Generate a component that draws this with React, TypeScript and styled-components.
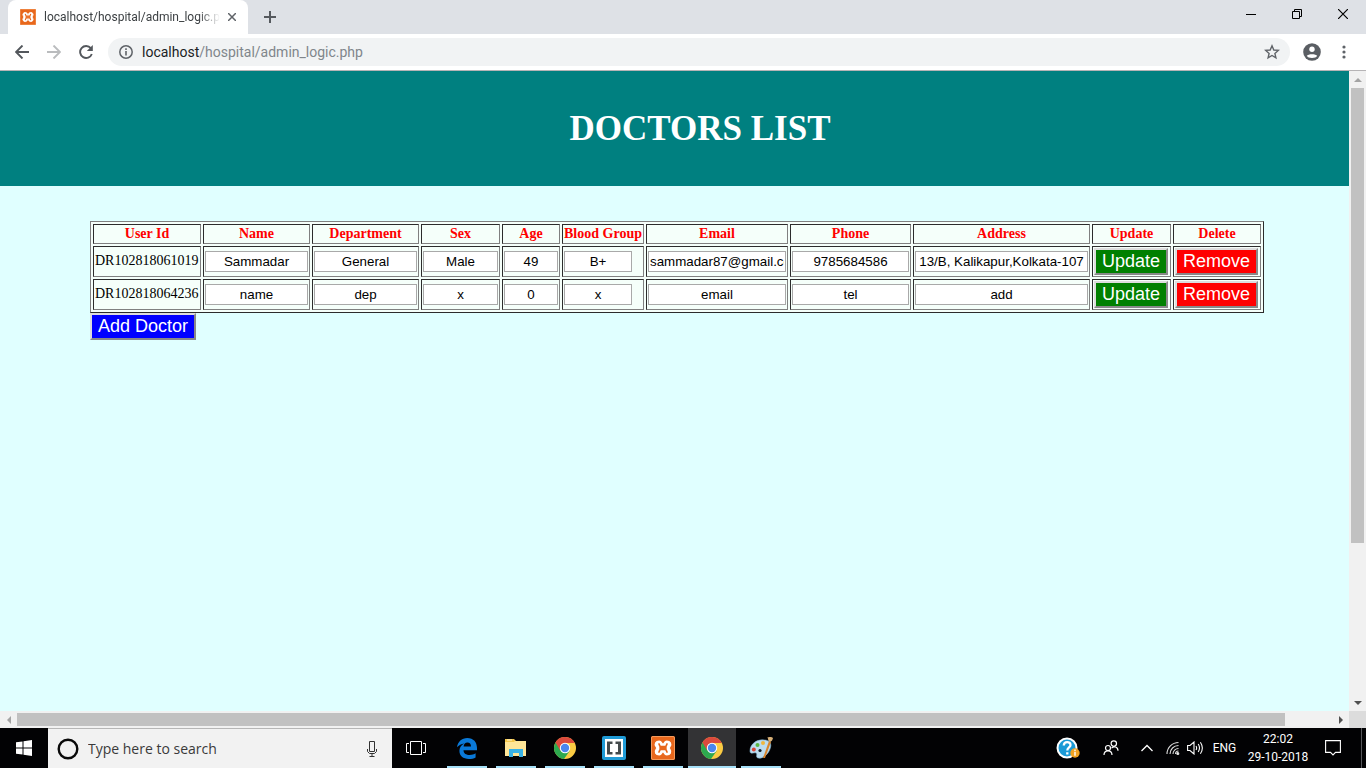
import React from "react";
import styled, { createGlobalStyle } from "styled-components";

const uiFont = `"Open Sans", "Noto Sans", sans-serif`;
const compactFont = `Roboto, "Open Sans", sans-serif`;

const GlobalStyle = createGlobalStyle`
  *, *::before, *::after { box-sizing: border-box; }
  html, body { margin: 0; height: 100%; }
  #root { height: 100%; }
  button { cursor: pointer; }
`;

const Desktop = styled.div`
  display: flex;
  flex-direction: column;
  height: 100vh;
  overflow: hidden;
  font-family: ${uiFont};
`;

const IconButton = styled.button<{ $width?: number }>`
  display: flex;
  align-items: center;
  justify-content: center;
  flex: none;
  width: ${(p) => p.$width ?? 32}px;
  height: 100%;
  padding: 0;
  border: 0;
  background: transparent;
  svg { display: block; flex: none; }
`;

/* Browser chrome */

const TabStrip = styled.div`
  display: flex;
  flex: none;
  height: 34px;
  padding-left: 8px;
  background: #dee1e6;
`;

const Tab = styled.div`
  display: flex;
  align-items: center;
  width: 240px;
  padding: 0 8px 0 12px;
  border-radius: 8px 8px 0 0;
  background: #fff;
`;

const TabTitle = styled.span`
  flex: 1;
  margin: 0 4px 0 8px;
  overflow: hidden;
  white-space: nowrap;
  font-family: ${compactFont};
  font-size: 12px;
  line-height: 16px;
  color: #3c4043;
  mask-image: linear-gradient(to right, #000 88%, transparent);
`;

const WindowControls = styled.div`
  display: flex;
  height: 28px;
  margin-left: auto;
`;

const Toolbar = styled.div`
  display: flex;
  align-items: center;
  flex: none;
  height: 37px;
  padding: 0 6px;
  border-bottom: 1px solid #b6b4b6;
  background: #fff;
`;

const AddressBar = styled.div`
  display: flex;
  align-items: center;
  flex: 1;
  height: 28px;
  margin: 0 6px;
  padding: 0 2px;
  border-radius: 14px;
  background: #f1f3f4;
`;

const Address = styled.div`
  flex: 1;
  font-family: ${compactFont};
  font-size: 14px;
  line-height: 20px;
  color: #80868b;
  b { font-weight: 400; color: #202124; }
`;

/* Scroll bars and page frame */

const Frame = styled.div`
  display: grid;
  grid-template-columns: minmax(0, 1fr) 17px;
  grid-template-rows: minmax(0, 1fr) 17px;
  flex: 1;
  min-height: 0;
`;

const Page = styled.main`
  overflow: hidden;
  background: #e0ffff;
  font-family: "Liberation Serif", "Times New Roman", serif;
`;

const Scrollbar = styled.div<{ $vertical?: boolean }>`
  display: flex;
  flex-direction: ${(p) => (p.$vertical ? "column" : "row")};
  align-items: stretch;
  background: #f1f1f1;
`;

const ScrollArrow = styled.button`
  display: flex;
  align-items: center;
  justify-content: center;
  flex: none;
  width: 17px;
  height: 17px;
  padding: 0;
  border: 0;
  background: transparent;
`;

const Thumb = styled.div<{ $share: number; $vertical?: boolean }>`
  flex: ${(p) => p.$share} 1 0;
  margin: ${(p) => (p.$vertical ? "0 2px" : "2px 0")};
  background: #c1c1c1;
`;

const Track = styled.div<{ $share: number }>`
  flex: ${(p) => p.$share} 1 0;
`;

const Corner = styled.div`
  background: #dcdcdc;
`;

/* Web page */

const Banner = styled.header`
  min-width: 1400px;
  padding: 38px 0 37px;
  background: #008080;
`;

const Title = styled.h1`
  margin: 0;
  font-size: 35px;
  line-height: 40px;
  text-align: center;
  color: #fff;
`;

const Content = styled.section`
  min-width: 1400px;
  padding: 35px 90px;
`;

const DoctorTable = styled.table`
  width: 1174px;
  table-layout: fixed;
  border: 1px solid;
  border-color: #808080 #2c2c2c #2c2c2c #808080;
  border-collapse: separate;
  border-spacing: 2px;
  background: #f5fffa;
  font-size: 14px;
  line-height: 16px;
  th, td {
    padding: 1px;
    border: 1px solid;
    border-color: #2c2c2c #808080 #808080 #2c2c2c;
    white-space: nowrap;
  }
  th { height: 20px; color: #f00; }
  td { height: 31px; }
  td:first-child { padding-bottom: 3px; }
`;

const Field = styled.input<{ $width?: number }>`
  display: block;
  width: ${(p) => (p.$width ? `${p.$width}px` : "100%")};
  height: 21px;
  padding: 1px;
  border: 1px solid #a9a9a9;
  background: #fff;
  font-family: "Liberation Sans", Arial, sans-serif;
  text-align: center;
  color: #000;
`;

const ActionButton = styled.button<{ $color: string }>`
  display: block;
  height: 27px;
  padding: 0 6px;
  border: 2px solid;
  border-color: #ddd #888 #888 #ddd;
  background: ${(p) => p.$color};
  font-family: "Liberation Sans", Arial, sans-serif;
  font-size: 18px;
  line-height: 21px;
  color: #fff;
`;

/* Taskbar */

const Taskbar = styled.footer`
  display: flex;
  flex: none;
  height: 40px;
  background: #020204;
  color: #fff;
`;

const SearchBox = styled.label`
  display: flex;
  align-items: center;
  width: 344px;
  padding: 0 12px 0 8px;
  border-top: 1px solid #b6b6b6;
  background: #f2f2f2;
  svg { flex: none; }
`;

const SearchInput = styled.input`
  flex: 1;
  min-width: 0;
  margin-left: 8px;
  padding: 0;
  border: 0;
  outline: 0;
  background: transparent;
  font-family: ${uiFont};
  font-size: 14px;
  line-height: 20px;
  &::placeholder { color: #3a3a3a; opacity: 1; }
`;

const Apps = styled.div`
  display: flex;
  gap: 1px;
  margin-left: 3px;
`;

const AppButton = styled.button<{ $active?: boolean }>`
  position: relative;
  display: flex;
  align-items: center;
  justify-content: center;
  width: 48px;
  padding: 0;
  border: 0;
  background: ${(p) => (p.$active ? "#333335" : "transparent")};
  &::after {
    content: "";
    position: absolute;
    bottom: 0;
    left: ${(p) => (p.$active ? 0 : 4)}px;
    right: ${(p) => (p.$active ? 0 : 4)}px;
    height: 2px;
    background: #a6e0f8;
  }
`;

const Tray = styled.div`
  display: flex;
  align-items: center;
  margin-left: auto;
`;

const TrayText = styled.button<{ $width: number }>`
  width: ${(p) => p.$width}px;
  padding: 0;
  border: 0;
  background: transparent;
  font-family: ${compactFont};
  font-size: 12px;
  line-height: 18px;
  white-space: nowrap;
  text-align: center;
  color: #fff;
`;

const ShowDesktop = styled.button`
  width: 5px;
  height: 100%;
  margin-left: 9px;
  padding: 0;
  border: 0;
  border-left: 1px solid #55565a;
  background: transparent;
`;

const XamppIcon = ({ size }: { size: number }) => (
  <svg width={size} height={size} viewBox="0 0 24 24" aria-hidden="true">
    <rect width="24" height="24" rx="1.500" fill="#e8671c" />
    <rect x=".5" y=".5" width="23" height="23" rx="1.500" fill="none" stroke="#f39a5c" />
    <path
      d="M8.200 5.200C4.600 5.200 3.500 8 5 10.300L6 12L5 13.700C3.500 16 4.600 18.800 8.200 18.800C11 18.800 10.400 15.800 12 15.800S13 18.800 15.800 18.800C19.400 18.800 20.500 16 19 13.700L18 12L19 10.300C20.500 8 19.400 5.200 15.800 5.200C13 5.200 13.600 8.200 12 8.200S11 5.200 8.200 5.200Z"
      fill="#fff"
      stroke="#fff"
      strokeWidth="1.400"
      strokeLinejoin="round"
    />
    <path
      d="M8 8L9.200 10.600H14.800L16 8M8 16L9.200 13.400H14.800L16 16M9.200 10.600V13.400M14.800 10.600V13.400"
      fill="none"
      stroke="#e8671c"
      strokeWidth="1.700"
      strokeLinecap="round"
    />
    <path d="M10 12H14" stroke="#e8671c" strokeWidth="2" />
  </svg>
);

const ChromeIcon = () => (
  <svg width="22" height="22" viewBox="0 0 22 22" aria-hidden="true">
    <circle cx="11" cy="11" r="11" fill="#fbcb43" />
    <path d="M11 11L1.500 5.500A11 11 0 0 0 10 22L15.800 13.800Z" fill="#2da94f" />
    <path d="M1.500 5.500L6.200 13.600L11 11L11 6H20.800A11 11 0 0 0 1.500 5.500Z" fill="#dc4a3d" />
    <circle cx="11" cy="11" r="5.200" fill="#fff" />
    <circle cx="11" cy="11" r="4.200" fill="#4a86ee" />
  </svg>
);

const EdgeIcon = () => (
  <svg width="20" height="21" viewBox="0 0 20 21" aria-hidden="true">
    <path
      d="M0 9.3C.8 3.700 4.700 0 10.300 0C16.500 0 20 4.300 20 10V12.300H6.500C6.700 15.700 9.300 17 12.600 17C15 17 17.100 16.300 18.600 15.300V19.500C16.900 20.500 14.500 21 11.900 21C6 21 2.400 17.800 2.400 12.800C2.400 9.500 4.300 6.900 7.300 5.400C4.300 5.800 1.800 7.200 0 9.300ZM6.600 8.500H14C14 5.900 12.700 4.400 10.400 4.400C8.300 4.400 6.900 5.900 6.600 8.500Z"
      fill="#0a79d8"
      fillRule="evenodd"
    />
  </svg>
);

const FolderIcon = () => (
  <svg width="22" height="18" viewBox="0 0 22 18" aria-hidden="true">
    <path d="M0 0H9L11 2H21V17H0Z" fill="#f5c84c" />
    <path d="M0 3H9L10 2H21V17H0Z" fill="#ffe698" />
    <path d="M4 18V10H18V18H14V14H8V18Z" fill="#39b2e5" />
    <path d="M2 1H7" stroke="#fff6d6" />
  </svg>
);

const BracketsIcon = () => (
  <svg width="24" height="24" viewBox="0 0 24 24" aria-hidden="true">
    <rect width="24" height="24" rx="2" fill="#1f9bd7" />
    <rect x="3" y="3" width="18" height="18" fill="#fff" />
    <path d="M5 5.500H10.500V8H8V16H10.500V18.500H5ZM19 5.500H13.500V8H16V16H13.500V18.500H19Z" fill="#444a4c" />
  </svg>
);

const PaintIcon = () => (
  <svg width="24" height="24" viewBox="0 0 24 24" aria-hidden="true">
    <path d="M1 15C1 8 8 3 15 4C21 4 23 8 21 13C19 19 13 23 9 22C6 21 9 18 7 17C5 16 1 19 1 15Z" fill="#bcdcef" stroke="#7fb2d2" strokeWidth=".6" />
    <circle cx="4.800" cy="13.500" r="2" fill="#d94436" />
    <circle cx="8.500" cy="9" r="2" fill="#5bb744" />
    <circle cx="14" cy="7" r="2" fill="#f0b63c" />
    <circle cx="11" cy="14.500" r="1.600" fill="#111a22" />
    <path d="M14 22L20 5L22 6L16 22Z" fill="#d9842b" />
    <path d="M18.500 1C20 2 21.500 0 24 2C23.500 4 23 5 21 6L19.500 5Z" fill="#d8b078" />
  </svg>
);

const columns: { label: string; width: number }[] = [
  { label: "User Id", width: 108 },
  { label: "Name", width: 107 },
  { label: "Department", width: 107 },
  { label: "Sex", width: 79 },
  { label: "Age", width: 58 },
  { label: "Blood Group", width: 82 },
  { label: "Email", width: 142 },
  { label: "Phone", width: 121 },
  { label: "Address", width: 177 },
  { label: "Update", width: 79 },
  { label: "Delete", width: 88 },
];

const doctors = [
  {
    id: "DR102818061019",
    values: ["Sammadar", "General", "Male", "49", "B+", "sammadar87@gmail.com", "9785684586", "13/B, Kalikapur,Kolkata-107"],
  },
  { id: "DR102818064236", values: ["name", "dep", "x", "0", "x", "email", "tel", "add"] },
];

const Browser = () => (
  <>
    <TabStrip>
      <Tab>
        <XamppIcon size={16} />
        <TabTitle>localhost/hospital/admin_logic.php</TabTitle>
        <IconButton $width={16} aria-label="Close tab">
          <svg width="8" height="8" viewBox="0 0 8 8"><path d="M0 0L8 8M8 0L0 8" stroke="#5f6368" strokeWidth="1.500" /></svg>
        </IconButton>
      </Tab>
      <IconButton $width={44} aria-label="New tab">
        <svg width="12" height="12" viewBox="0 0 12 12"><path d="M6 0V12M0 6H12" stroke="#55595e" strokeWidth="2" /></svg>
      </IconButton>
      <WindowControls>
        <IconButton $width={46} aria-label="Minimize">
          <svg width="10" height="10" viewBox="0 0 10 10"><path d="M0 5.500H10" stroke="#000" /></svg>
        </IconButton>
        <IconButton $width={46} aria-label="Restore">
          <svg width="10" height="10" viewBox="0 0 10 10"><path d="M.5 2.500H7.500V9.500H.5ZM2.500 2.500V.5H9.500V7.500H7.500" fill="none" stroke="#000" /></svg>
        </IconButton>
        <IconButton $width={46} aria-label="Close window">
          <svg width="10" height="10" viewBox="0 0 10 10"><path d="M0 0L10 10M10 0L0 10" stroke="#000" strokeWidth="1.200" /></svg>
        </IconButton>
      </WindowControls>
    </TabStrip>
    <Toolbar>
      <IconButton aria-label="Back">
        <svg width="14" height="14" viewBox="0 0 14 14"><path d="M14 7H1M7.500 .5L1 7L7.500 13.500" fill="none" stroke="#53575c" strokeWidth="1.900" /></svg>
      </IconButton>
      <IconButton aria-label="Forward">
        <svg width="14" height="14" viewBox="0 0 14 14"><path d="M0 7H13M6.500 .5L13 7L6.500 13.500" fill="none" stroke="#babcbe" strokeWidth="1.900" /></svg>
      </IconButton>
      <IconButton aria-label="Reload">
        <svg width="14" height="14" viewBox="0 0 14 14">
          <path d="M11.800 3.200A6 6 0 1 0 12.800 9" fill="none" stroke="#53575c" strokeWidth="1.900" />
          <path d="M13.800 0V6H7.800Z" fill="#53575c" />
        </svg>
      </IconButton>
      <AddressBar>
        <IconButton aria-label="Site information">
          <svg width="14" height="14" viewBox="0 0 14 14">
            <circle cx="7" cy="7" r="6.200" fill="none" stroke="#5f6368" strokeWidth="1.500" />
            <path d="M7 6V10.500M7 3.300V4.900" stroke="#5f6368" strokeWidth="1.600" />
          </svg>
        </IconButton>
        <Address><b>localhost</b>/hospital/admin_logic.php</Address>
        <IconButton aria-label="Bookmark this page">
          <svg width="16" height="16" viewBox="0 0 16 16">
            <path d="M8 1.800L9.800 6L14.300 6.400L10.900 9.400L11.900 13.800L8 11.500L4.100 13.800L5.100 9.400L1.700 6.400L6.200 6Z" fill="none" stroke="#5f6368" strokeWidth="1.400" />
          </svg>
        </IconButton>
      </AddressBar>
      <IconButton aria-label="Profile">
        <svg width="18" height="18" viewBox="0 0 18 18">
          <circle cx="9" cy="9" r="8.800" fill="#5a5e63" />
          <circle cx="9" cy="6.200" r="2.700" fill="#fff" />
          <path d="M3.800 12.800C5 10.600 13 10.600 14.200 12.800C13 15.800 5 15.800 3.800 12.800Z" fill="#fff" />
        </svg>
      </IconButton>
      <IconButton aria-label="Menu">
        <svg width="4" height="14" viewBox="0 0 4 14" fill="#5f6368">
          <circle cx="2" cy="2" r="1.600" /><circle cx="2" cy="7" r="1.600" /><circle cx="2" cy="12" r="1.600" />
        </svg>
      </IconButton>
    </Toolbar>
  </>
);

const DoctorsPage = () => (
  <Page>
    <Banner>
      <Title>DOCTORS LIST</Title>
    </Banner>
    <Content>
      <DoctorTable>
        <colgroup>
          {columns.map((c) => <col key={c.label} width={c.width} />)}
        </colgroup>
        <thead>
          <tr>{columns.map((c) => <th key={c.label} scope="col">{c.label}</th>)}</tr>
        </thead>
        <tbody>
          {doctors.map((doctor) => (
            <tr key={doctor.id}>
              <td>{doctor.id}</td>
              {doctor.values.map((value, i) => {
                const label = columns[i + 1].label;
                return (
                  <td key={label}>
                    <Field
                      type="text"
                      aria-label={`${label} of ${doctor.id}`}
                      defaultValue={value}
                      $width={label === "Blood Group" ? 68 : undefined}
                    />
                  </td>
                );
              })}
              <td><ActionButton type="button" $color="#008000">Update</ActionButton></td>
              <td><ActionButton type="button" $color="#ff0000">Remove</ActionButton></td>
            </tr>
          ))}
        </tbody>
      </DoctorTable>
      <ActionButton type="button" $color="#0000ff">Add Doctor</ActionButton>
    </Content>
  </Page>
);

const Arrow = ({ d, color }: { d: string; color: string }) => (
  <svg width="8" height="8" viewBox="0 0 8 8" aria-hidden="true"><path d={d} fill={color} /></svg>
);

const WindowsTaskbar = () => (
  <Taskbar>
    <IconButton $width={48} aria-label="Start">
      <svg width="16" height="16" viewBox="0 0 16 16" fill="#fff">
        <path d="M0 2.300L6.500 1.400V7.500H0ZM7.500 1.200L16 0V7.500H7.500ZM0 8.500H6.500V14.600L0 13.700ZM7.500 8.500H16V16L7.500 14.800Z" />
      </svg>
    </IconButton>
    <SearchBox>
      <svg width="24" height="24" viewBox="0 0 24 24" aria-hidden="true"><circle cx="12" cy="12" r="9.300" fill="none" stroke="#0a0a0a" strokeWidth="2.400" /></svg>
      <SearchInput type="text" aria-label="Search" placeholder="Type here to search" />
      <svg width="16" height="18" viewBox="0 0 16 18" fill="none" stroke="#333" aria-hidden="true">
        <path d="M5.500 1.500H10.500V11.500H5.500ZM3.500 9V11.500L5.500 13.500H10.500L12.500 11.500V9M8 13.500V16.500M5.500 16.500H10.500" />
      </svg>
    </SearchBox>
    <IconButton $width={48} aria-label="Task view">
      <svg width="20" height="14" viewBox="0 0 20 14" fill="none" stroke="#fff">
        <path d="M4.500 .5H15.500V13.500H4.500ZM3 2.500H.5V11.500H3M17 2.500H19.500V11.500H17" />
      </svg>
    </IconButton>
    <Apps>
      <AppButton aria-label="Edge"><EdgeIcon /></AppButton>
      <AppButton aria-label="File Explorer"><FolderIcon /></AppButton>
      <AppButton aria-label="Chrome"><ChromeIcon /></AppButton>
      <AppButton aria-label="Brackets"><BracketsIcon /></AppButton>
      <AppButton aria-label="XAMPP"><XamppIcon size={24} /></AppButton>
      <AppButton $active aria-label="Chrome, active window"><ChromeIcon /></AppButton>
      <AppButton aria-label="Paint"><PaintIcon /></AppButton>
    </Apps>
    <Tray>
      <IconButton $width={44} aria-label="Help">
        <svg width="24" height="24" viewBox="0 0 24 24">
          <circle cx="11" cy="12" r="9.500" fill="#1b9ad6" stroke="#fff" strokeWidth="2" />
          <path d="M7.800 9.500C7.800 5 14.500 5 14.500 9C14.500 11.500 11.300 11.500 11.300 14.500M11.300 16.200V18.600" fill="none" stroke="#fff" strokeWidth="2.300" />
          <circle cx="19" cy="17" r="4.700" fill="#f2a322" />
          <path d="M19 15.800V19.800M19 13.600V15" stroke="#fff" strokeWidth="1.400" />
        </svg>
      </IconButton>
      <IconButton $width={42} aria-label="People">
        <svg width="16" height="16" viewBox="0 0 16 16" fill="none" stroke="#fff" strokeWidth="1.200">
          <circle cx="10.800" cy="3.600" r="2.700" /><circle cx="5" cy="8" r="2.500" />
          <path d="M1 15C1 9.500 9 9.500 9 15M8.500 8.200C11 5.500 15 7 15 10.800" />
        </svg>
      </IconButton>
      <IconButton $width={30} aria-label="Show hidden icons">
        <svg width="12" height="8" viewBox="0 0 12 8"><path d="M.5 7L6 1.500L11.500 7" fill="none" stroke="#fff" strokeWidth="1.300" /></svg>
      </IconButton>
      <IconButton $width={22} aria-label="Network">
        <svg width="14" height="14" viewBox="0 0 14 14" fill="none" stroke="#ddd" strokeWidth="1.100">
          <path d="M1 13A11.500 11.500 0 0 1 12.500 1.500M4 13A8.500 8.500 0 0 1 12.500 4.500M7 13A5.500 5.500 0 0 1 12.500 7.500M9.500 13A3 3 0 0 1 12.500 10" />
          <circle cx="11.800" cy="12.500" r="1" fill="#fff" />
        </svg>
      </IconButton>
      <IconButton $width={23} aria-label="Volume">
        <svg width="17" height="14" viewBox="0 0 17 14" fill="none" stroke="#fff" strokeWidth="1.100">
          <path d="M.6 4.500H3L7 1V13L3 9.500H.6ZM9 5Q10.300 7 9 9M11.200 3Q13.800 7 11.200 11M13.400 1.200Q17.300 7 13.400 12.800" />
        </svg>
      </IconButton>
      <TrayText $width={35}>ENG</TrayText>
      <TrayText $width={72}>22:02<br />29-10-2018</TrayText>
      <IconButton $width={38} aria-label="Notifications">
        <svg width="16" height="16" viewBox="0 0 16 16" fill="none" stroke="#fff" strokeWidth="1.100">
          <path d="M.6 .6H15.400V12.400H10.500L8 15L5.500 12.400H.6Z" />
        </svg>
      </IconButton>
      <ShowDesktop aria-label="Show desktop" />
    </Tray>
  </Taskbar>
);

export default function App() {
  return (
    <Desktop>
      <GlobalStyle />
      <Browser />
      <Frame>
        <DoctorsPage />
        <Scrollbar $vertical>
          <ScrollArrow aria-label="Scroll up"><Arrow d="M0 6L4 2L8 6Z" color="#a3a3a3" /></ScrollArrow>
          <Thumb $vertical $share={3} />
          <Track $share={1} />
          <ScrollArrow aria-label="Scroll down"><Arrow d="M0 2L4 6L8 2Z" color="#505050" /></ScrollArrow>
        </Scrollbar>
        <Scrollbar>
          <ScrollArrow aria-label="Scroll left"><Arrow d="M6 0L2 4L6 8Z" color="#a3a3a3" /></ScrollArrow>
          <Thumb $share={27} />
          <Track $share={1} />
          <ScrollArrow aria-label="Scroll right"><Arrow d="M2 0L6 4L2 8Z" color="#505050" /></ScrollArrow>
        </Scrollbar>
        <Corner />
      </Frame>
      <WindowsTaskbar />
    </Desktop>
  );
}
